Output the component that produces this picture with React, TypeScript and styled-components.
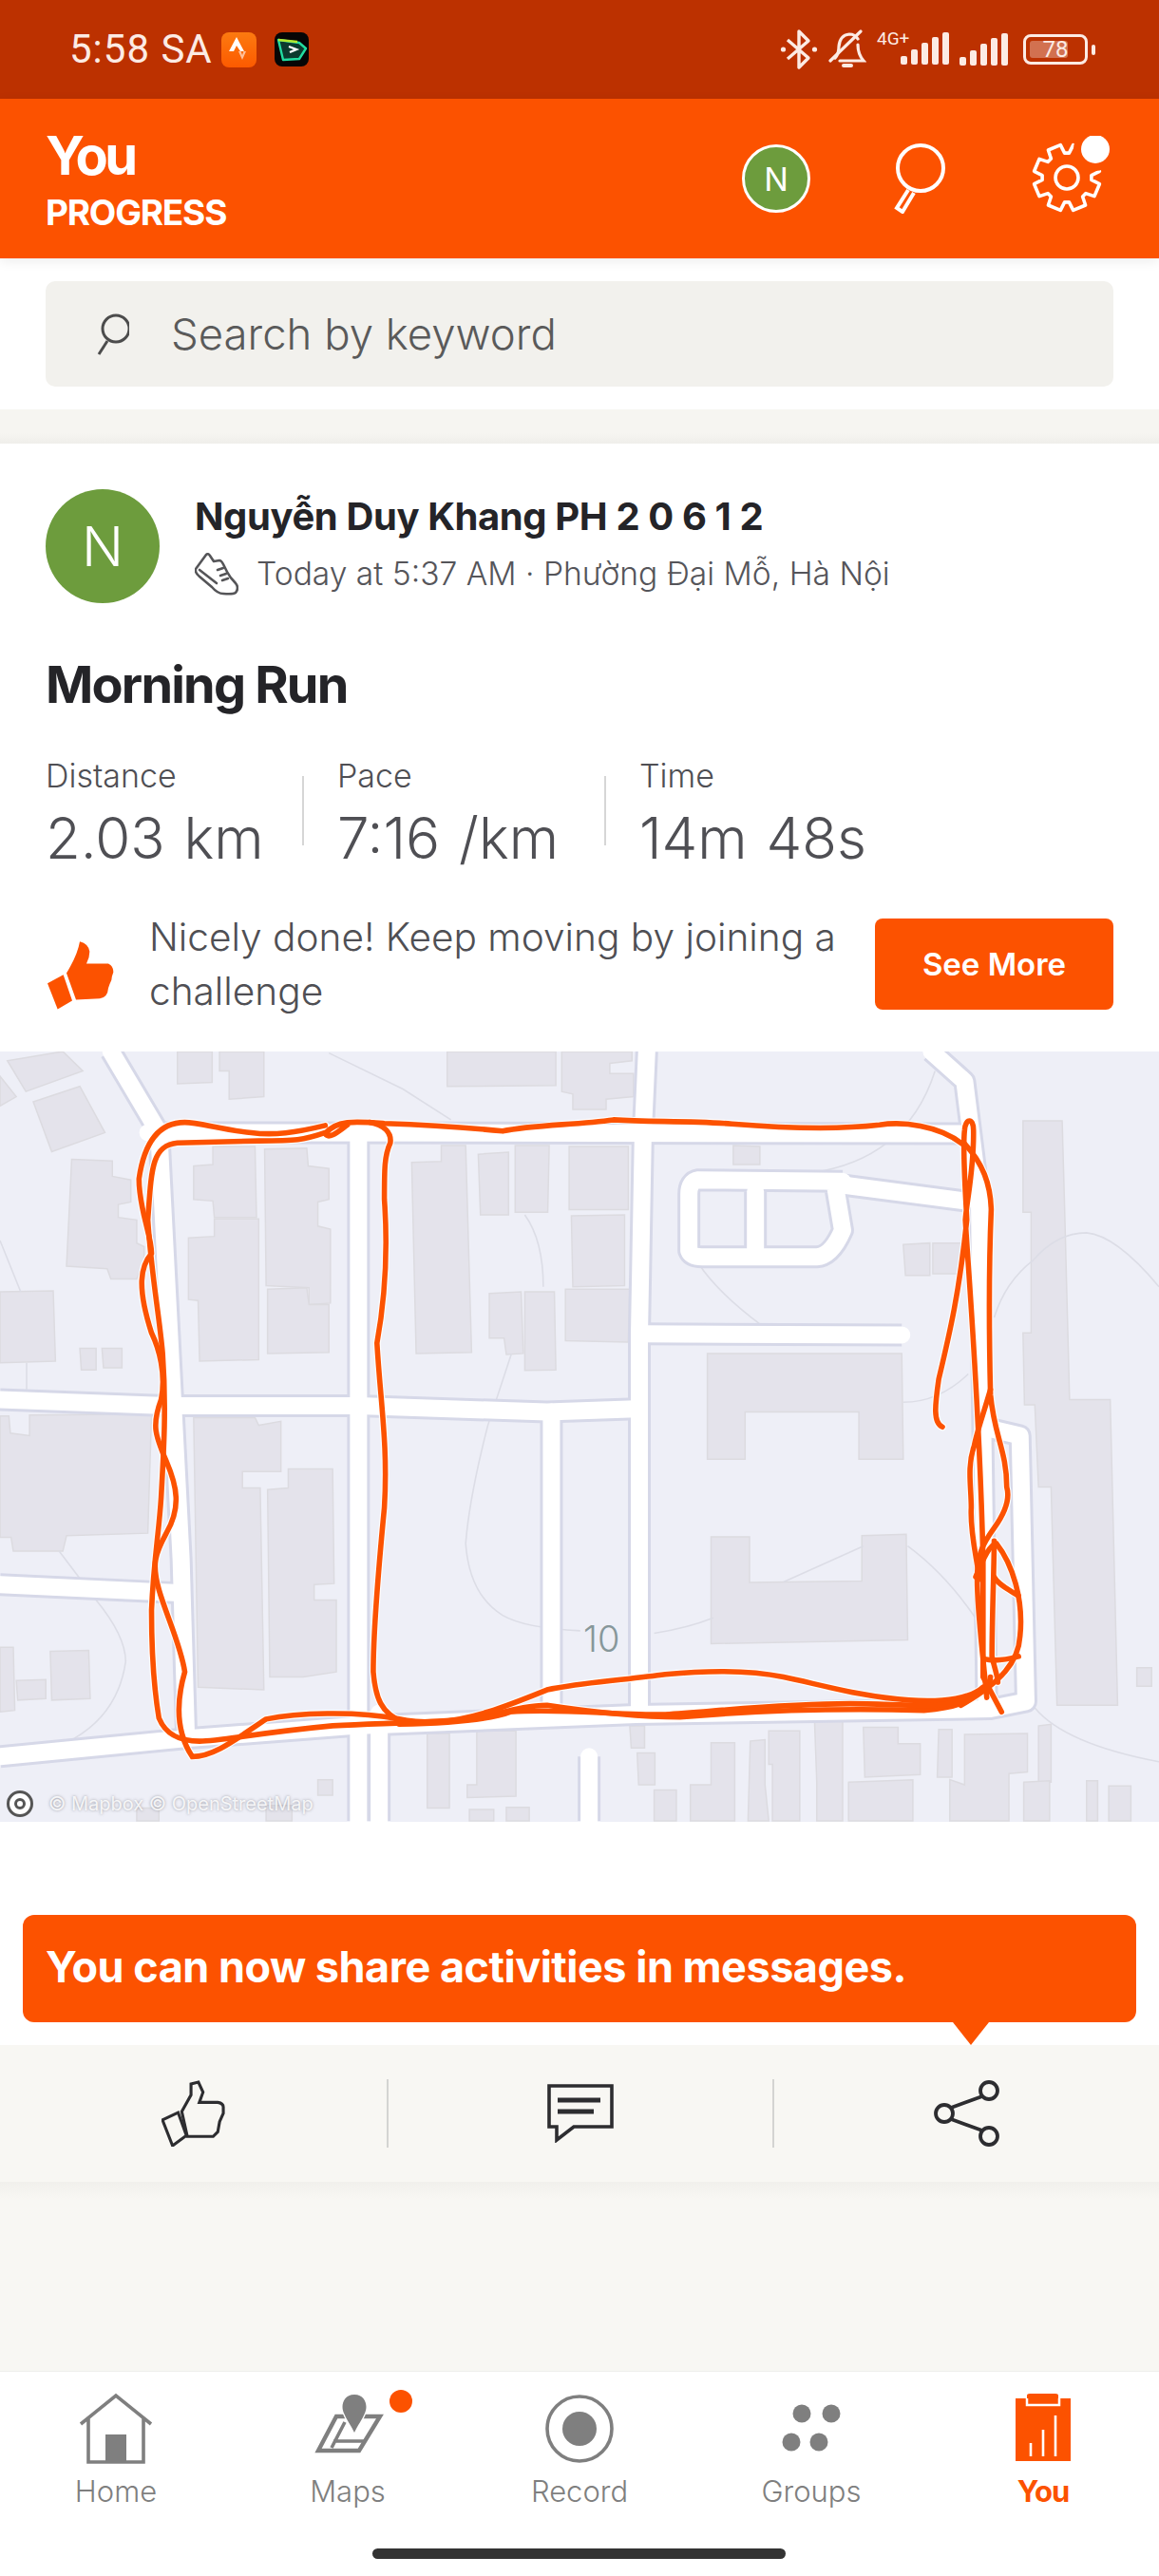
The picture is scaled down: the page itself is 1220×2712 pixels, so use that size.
import React from "react";
import styled, { createGlobalStyle } from "styled-components";

const ORANGE = "#FC5200";

const Global = createGlobalStyle`
  html, body { margin: 0; padding: 0; background: #fff; }
  body { font-family: Inter, "Noto Sans", sans-serif; }
  * { box-sizing: border-box; }
`;

const Page = styled.div`
  width: 1220px;
  height: 2712px;
  overflow: hidden;
  display: flex;
  flex-direction: column;
  background: #fff;
`;

/* ---------- status bar ---------- */
const StatusBar = styled.div`
  height: 104px;
  flex: none;
  background: #bc3100;
  display: flex;
  align-items: center;
  justify-content: space-between;
  padding: 0 64px 0 73px;
  color: #fcebe4;
`;
const StatusLeft = styled.div`
  display: flex;
  align-items: center;
  gap: 9px;
`;
const Clock = styled.span`
  font: 400 42px/1 Roboto, sans-serif;
  letter-spacing: 1px;
`;
const StatusRight = styled.div`
  display: flex;
  align-items: center;
  gap: 11px;
`;
const NetLabel = styled.div`
  position: relative;
  width: 76px;
  height: 36px;
  display: flex;
  justify-content: flex-end;
`;
const FourG = styled.span`
  position: absolute;
  left: 0;
  top: -3px;
  font: 400 19px/1 Roboto, sans-serif;
`;
const Battery = styled.div`
  position: relative;
  width: 68px;
  height: 32px;
  border: 3px solid #fcebe4;
  border-radius: 8px;
  margin-left: 5px;
  margin-right: 11px;
  display: flex;
  align-items: center;
  justify-content: center;
  font: 400 24px/1 Roboto, sans-serif;
  &::before {
    content: "";
    position: absolute;
    left: 4px;
    top: 4px;
    bottom: 4px;
    width: 40px;
    border-radius: 3px;
    background: rgba(252, 235, 228, 0.35);
  }
  &::after {
    content: "";
    position: absolute;
    right: -11px;
    top: 8px;
    width: 4px;
    height: 11px;
    border-radius: 2px;
    background: #fcebe4;
  }
`;
const BatteryValue = styled.span`
  position: relative;
`;

/* ---------- header ---------- */
const Header = styled.header`
  position: relative;
  z-index: 2;
  height: 168px;
  flex: none;
  background: ${ORANGE};
  display: flex;
  justify-content: space-between;
  align-items: center;
  padding: 0 50px 0 48px;
  color: #fff;
  box-shadow: 0 3px 12px rgba(0, 0, 0, 0.08);
`;
const HeaderTitles = styled.div`
  display: flex;
  flex-direction: column;
`;
const HeaderTitle = styled.div`
  font-size: 56px;
  line-height: 68px;
  font-weight: 700;
  letter-spacing: -3.4px;
`;
const HeaderSub = styled.div`
  font-size: 37px;
  line-height: 44px;
  font-weight: 700;
  letter-spacing: -1.2px;
  margin-top: 4px;
`;
const HeaderActions = styled.div`
  display: flex;
  align-items: center;
`;
const HeaderAvatar = styled.div`
  width: 72px;
  height: 72px;
  border-radius: 50%;
  border: 3px solid #fff;
  background: #6d9c3d;
  display: flex;
  align-items: center;
  justify-content: center;
  font-size: 34px;
  color: #fff;
  margin-right: 87px;
`;
const SearchGlass = styled.svg`
  display: block;
  margin-right: 84px;
`;

/* ---------- search ---------- */
const SearchSection = styled.section`
  flex: none;
  height: 159px;
  padding: 24px 48px;
  background: #fff;
`;
const SearchBox = styled.div`
  height: 111px;
  border-radius: 10px;
  background: #f2f1ed;
  display: flex;
  align-items: center;
  padding-left: 54px;
  gap: 44px;
  font-size: 45.5px;
  color: #5a5a5a;
  font-weight: 300;
`;
const Gap = styled.div`
  flex: none;
  height: 36px;
  background: linear-gradient(#f6f5f1 70%, #efeeea 100%);
`;

/* ---------- activity card ---------- */
const Card = styled.article`
  flex: none;
  padding: 48px 48px 44px;
  background: #fff;
`;
const AuthorRow = styled.div`
  display: flex;
  gap: 37px;
  height: 120px;
`;
const AuthorAvatar = styled.div`
  width: 120px;
  height: 120px;
  border-radius: 50%;
  background: #6d9c3d;
  color: #fff;
  font-size: 58px;
  font-weight: 300;
  display: flex;
  align-items: center;
  justify-content: center;
`;
const AuthorText = styled.div`
  display: flex;
  flex-direction: column;
`;
const AuthorName = styled.div`
  font-size: 40px;
  line-height: 58px;
  font-weight: 700;
  color: #242428;
  letter-spacing: -0.4px;
`;
const AuthorMeta = styled.div`
  display: flex;
  align-items: center;
  gap: 19px;
  margin-top: 7px;
  font-size: 33.6px;
  line-height: 48px;
  font-weight: 300;
  color: #55555a;
`;
const ActivityTitle = styled.h1`
  margin: 51px 0 0;
  font-size: 54px;
  line-height: 70px;
  font-weight: 700;
  color: #242428;
  letter-spacing: -1.8px;
`;
const Stats = styled.div`
  display: flex;
  margin-top: 41px;
`;
const Stat = styled.div<{ $width: number }>`
  width: ${(p) => p.$width}px;
  flex: none;
`;
const StatLabel = styled.div`
  font-size: 34px;
  line-height: 40px;
  font-weight: 300;
  color: #4f4f54;
`;
const StatValue = styled.div`
  margin-top: 11px;
  font-size: 60px;
  line-height: 68px;
  font-weight: 300;
  word-spacing: 3px;
  color: #4f4f54;
`;
const StatDivider = styled.div`
  flex: none;
  width: 2px;
  height: 73px;
  margin: 20px 35px 0 0;
  background: #d6d6d6;
`;
const TipRow = styled.div`
  display: flex;
  align-items: center;
  height: 96px;
  margin-top: 51px;
`;
const TipThumb = styled.svg`
  flex: none;
  display: block;
  margin: 24px 37px 0 2px;
`;
const TipText = styled.div`
  flex: 1;
  font-size: 40.6px;
  line-height: 57px;
  font-weight: 300;
  color: #4f4f54;
  white-space: pre-line;
`;
const PrimaryButton = styled.button`
  flex: none;
  width: 251px;
  height: 96px;
  border: 0;
  border-radius: 8px;
  background: ${ORANGE};
  color: #fff;
  font: 600 33px Inter, sans-serif;
`;

/* ---------- map ---------- */
const MapFrame = styled.div`
  position: relative;
  flex: none;
  height: 811px;
  background: #eeeff7;
  overflow: hidden;
`;
const MapArt = styled.svg`
  display: block;
  width: 1220px;
  height: 811px;
`;
const MapLabel = styled.span`
  position: absolute;
  left: 614px;
  top: 595px;
  font-size: 38px;
  font-weight: 300;
  color: #87979a;
`;
const Attribution = styled.div`
  position: absolute;
  left: 7px;
  bottom: 5px;
  display: flex;
  align-items: center;
  gap: 16px;
  font-size: 20px;
  color: rgba(255, 255, 255, 0.85);
  text-shadow: 0 0 3px rgba(120, 120, 130, 0.7);
`;
const MapboxMark = styled.span`
  width: 28px;
  height: 28px;
  border-radius: 50%;
  border: 3px solid #555;
  background: #fff;
  display: block;
  position: relative;
  &::after {
    content: "";
    position: absolute;
    inset: 5px;
    border-radius: 50%;
    border: 3px solid #555;
  }
`;

/* ---------- share prompt ---------- */
const PromptSection = styled.section`
  flex: none;
  height: 235px;
  padding: 98px 24px 0;
  background: #fff;
`;
const Prompt = styled.div`
  position: relative;
  height: 113px;
  border-radius: 12px;
  background: ${ORANGE};
  color: #fff;
  display: flex;
  align-items: center;
  padding: 0 0 4px 24px;
  font-size: 45px;
  font-weight: 700;
  letter-spacing: -0.5px;
  &::after {
    content: "";
    position: absolute;
    left: 979px;
    top: 113px;
    border-left: 19px solid transparent;
    border-right: 19px solid transparent;
    border-top: 24px solid ${ORANGE};
  }
`;

/* ---------- action bar ---------- */
const ActionBar = styled.div`
  flex: none;
  height: 144px;
  display: grid;
  grid-template-columns: repeat(3, 1fr);
  align-items: center;
  background: #f8f7f3;
`;
const ActionCell = styled.div<{ $divider?: boolean }>`
  position: relative;
  display: flex;
  justify-content: center;
  align-items: center;
  height: 72px;
  border-left: ${(p) => (p.$divider ? "2px solid #d4d4d2" : "none")};
`;
const Filler = styled.div`
  flex: none;
  height: 199px;
  background: linear-gradient(#f1f0ec 0, #f8f7f3 18px);
`;

/* ---------- tab bar ---------- */
const TabBar = styled.nav`
  position: relative;
  flex: 1;
  background: #fff;
  border-top: 1px solid #efefec;
  display: grid;
  grid-template-columns: repeat(5, 1fr);
  padding-top: 23px;
  align-content: start;
`;
const Tab = styled.div<{ $active?: boolean }>`
  display: flex;
  flex-direction: column;
  align-items: center;
  color: ${(p) => (p.$active ? ORANGE : "#7f7f7f")};
  font-size: 31px;
  font-weight: ${(p) => (p.$active ? 700 : 300)};
  letter-spacing: ${(p) => (p.$active ? "-1px" : "0")};
`;
const TabIcon = styled.svg`
  display: block;
  width: 100px;
  height: 76px;
  overflow: visible;
`;
const TabLabel = styled.span`
  margin-top: 7px;
  line-height: 40px;
`;
const HomeIndicator = styled.div`
  position: absolute;
  left: 392px;
  top: 186px;
  width: 435px;
  height: 11px;
  border-radius: 6px;
  background: #333;
`;

/* ---------- map data (coordinates in the 1568×1500 drawing space) ---------- */
const roads = [
  "M150 12 L215 170 L245 1000 L252 1345",
  "M485 170 L485 1510",
  "M513 1300 L513 1510",
  "M875 12 L870 170 L865 560 L865 1295",
  "M200 170 L1310 172",
  "M0 690 L225 702 L485 702 L740 714 L860 708",
  "M746 714 L746 1290",
  "M0 1385 L250 1350 L480 1325 L860 1303 L1340 1292 L1388 1278 L1380 760 L1335 745",
  "M1260 12 L1305 70 L1325 300 L1335 1292",
  "M872 562 L1220 564",
  "M1140 265 L945 262 Q932 265 932 290 L932 400 Q935 412 950 412 L1105 412 Q1125 410 1140 360 L1130 275",
  "M1130 270 L1305 303",
  "M1022 285 L1022 395",
  "M0 1050 L235 1066",
  "M797 1385 L797 1510",
];

const paths = [
  "M445 15 L545 85 L610 145",
  "M1265 50 Q1245 140 1200 190 Q1160 235 1100 248",
  "M945 425 Q970 480 1030 545",
  "M710 330 Q735 380 735 470",
  "M692 600 L660 740 Q635 880 630 970 Q635 1070 680 1110 Q710 1135 785 1140",
  "M885 1145 Q930 1135 965 1115",
  "M1060 1045 L1168 975",
  "M1228 975 Q1280 1030 1322 1120",
  "M1222 695 Q1270 695 1310 640",
  "M1345 530 Q1360 460 1398 418 Q1430 365 1470 365 Q1510 370 1568 470",
  "M1400 1290 Q1440 1360 1568 1395",
  "M0 380 L28 480",
  "M36 618 L36 670",
  "M80 985 L130 1080 Q170 1150 170 1200 Q160 1300 100 1350",
];

const buildings = [
  "240,12 287,12 287,72 240,75",
  "297,12 357,12 357,100 310,105 310,50 297,50",
  "605,12 752,12 752,78 605,80",
  "760,12 855,12 855,30 825,35 825,55 857,55 857,100 820,105 820,125 775,125 775,95 760,90",
  "10,30 85,12 112,50 35,90",
  "0,60 22,100 0,118",
  "45,110 108,80 142,170 70,207",
  "97,222 152,225 152,255 177,262 177,305 160,310 160,335 185,340 185,385 195,392 195,420 185,455 150,455 145,435 90,430",
  "0,480 72,478 75,615 0,618",
  "108,590 130,590 130,632 110,632",
  "138,590 165,590 165,628 140,628",
  "262,235 288,232 288,197 345,197 347,335 290,335 288,303 262,300",
  "358,202 415,200 417,235 445,240 445,300 430,305 430,352 447,358 447,502 418,505 418,472 360,468",
  "255,375 290,372 290,338 350,338 350,612 270,615 268,497 255,495",
  "362,475 415,472 418,505 445,505 445,598 362,600",
  "557,228 597,226 597,195 630,195 638,598 563,600",
  "647,212 688,208 688,330 650,330",
  "697,195 743,195 741,325 697,325",
  "770,197 850,197 850,320 770,320",
  "773,332 845,330 845,468 775,470",
  "662,483 705,480 708,600 685,602 682,570 662,570",
  "710,480 750,480 752,632 710,633",
  "765,475 852,475 850,578 765,575",
  "992,195 1028,197 1028,232 992,232",
  "1222,388 1258,385 1258,448 1225,448",
  "1262,385 1300,385 1298,445 1262,445",
  "957,600 1220,600 1222,806 1162,806 1162,714 1008,714 1008,806 957,806",
  "962,957 1014,957 1014,1046 1166,1043 1166,955 1226,952 1228,1158 962,1165",
  "1384,147 1437,147 1440,300 1447,690 1502,690 1512,1285 1430,1285 1422,860 1405,860 1400,700 1386,700 1384,560 1395,560 1395,325 1384,325",
  "1538,1212 1558,1212 1558,1248 1538,1248",
  "0,722 12,722 14,755 40,760 40,720 205,718 200,950 90,955 85,985 18,985 15,958 0,958",
  "262,725 345,725 350,740 380,732 380,830 328,830 328,862 352,862 357,1255 268,1250",
  "362,865 390,862 390,825 450,825 452,1048 425,1050 425,1080 455,1080 455,1220 410,1230 365,1230",
  "0,1172 18,1172 20,1295 0,1298",
  "22,1237 62,1235 62,1272 24,1275",
  "68,1180 120,1178 122,1272 70,1275",
  "578,1340 608,1340 608,1485 578,1485",
  "645,1335 698,1335 698,1462 632,1465 632,1440 645,1440",
  "852,1325 872,1325 872,1368 854,1368",
  "862,1378 886,1378 886,1440 864,1440",
  "885,1450 915,1450 915,1510 885,1510",
  "962,1358 994,1358 994,1510 934,1510 934,1440 962,1440",
  "1015,1355 1035,1352 1035,1440 1040,1510 1012,1510",
  "1040,1335 1082,1335 1082,1510 1045,1510 1045,1400 1040,1400",
  "1102,1315 1140,1315 1140,1510 1105,1510 1105,1435",
  "1168,1328 1215,1328 1215,1360 1245,1360 1245,1420 1170,1425",
  "1148,1435 1235,1430 1235,1510 1148,1510",
  "1270,1332 1288,1332 1288,1425 1268,1425",
  "1305,1342 1390,1340 1390,1415 1365,1418 1365,1510 1285,1510 1285,1430 1305,1440",
  "1405,1325 1422,1322 1422,1435 1405,1435",
  "1385,1435 1420,1432 1420,1510 1385,1510",
  "1470,1432 1485,1432 1485,1510 1470,1510",
  "1500,1442 1530,1442 1530,1510 1500,1510",
  "430,1430 450,1430 450,1460 430,1460",
  "635,1488 668,1488 668,1510 635,1510",
  "685,1484 716,1484 716,1510 685,1510",
  "360,1480 395,1480 395,1510 360,1510",
  "185,1485 215,1485 215,1510 185,1510",
];

const route = [
  "M1275 743 C1262 735 1265 700 1270 650 C1285 560 1298 480 1308 340 C1306 280 1302 200 1305 165 C1306 142 1317 140 1317 165 C1318 240 1308 300 1306 340 C1312 480 1325 700 1330 1000 L1330 1230 L1355 1298",
  "M1302 192 C1270 155 1220 148 1190 155 C1130 165 1050 160 990 153 C930 146 880 150 830 145 C780 155 720 155 680 167 C630 160 580 155 520 152 C480 148 455 145 440 172 C445 185 460 165 470 155",
  "M440 156 C400 170 370 176 340 170 C300 165 270 150 250 150 C215 150 195 190 188 260 C188 320 205 370 205 405 C190 430 185 470 205 560 C215 590 225 640 218 690 C205 740 210 760 225 810 C240 860 245 900 225 950 C210 990 205 1010 215 1060 C225 1110 245 1170 250 1220 C240 1270 235 1330 260 1385 C290 1385 320 1350 360 1312 C400 1300 480 1295 540 1312 C560 1318 575 1318 590 1318",
  "M440 170 C410 185 400 186 350 186 L240 190 C205 195 205 240 200 340 C205 450 215 520 220 600 C225 700 222 780 218 880 C215 950 208 1000 205 1100 C205 1180 208 1250 215 1310 C225 1345 245 1355 270 1355 C300 1355 340 1340 450 1325 C520 1320 560 1320 640 1312 C680 1300 710 1285 740 1285 C800 1298 860 1308 920 1308 C1000 1298 1120 1290 1250 1295 C1290 1290 1315 1280 1330 1250",
  "M500 150 C520 155 530 170 528 190 C520 215 520 240 520 300 C525 400 520 500 510 580 C515 700 525 780 520 900 C510 1050 505 1150 505 1220 C508 1270 515 1300 545 1318",
  "M590 1318 C640 1312 680 1290 740 1255 C780 1242 850 1235 900 1225 C950 1218 1010 1215 1060 1230 C1110 1245 1170 1270 1230 1275 C1280 1280 1315 1270 1330 1250",
  "M540 1322 C600 1320 660 1315 690 1298 C760 1290 830 1305 900 1303 C980 1295 1060 1282 1150 1282 C1220 1282 1280 1295 1310 1270 C1330 1255 1340 1245 1340 1230",
  "M1304 190 C1330 230 1340 270 1341 320 C1338 420 1338 560 1340 680 C1345 760 1362 790 1362 860 C1368 890 1355 920 1345 940 C1330 970 1322 990 1322 1040 C1322 1100 1328 1160 1335 1270",
  "M1340 670 C1330 720 1320 760 1318 780 C1308 820 1314 860 1314 900 C1312 950 1322 1000 1325 1040",
  "M1320 1035 C1330 1000 1340 970 1348 970 C1370 1010 1385 1080 1380 1150 C1378 1200 1355 1240 1300 1285",
  "M1345 965 C1345 1010 1342 1120 1342 1190 C1345 1210 1350 1230 1350 1240",
  "M1332 1195 C1345 1200 1365 1195 1378 1190",
  "M1345 1035 C1350 1050 1365 1060 1378 1072",
];

/* ---------- icons ---------- */
const gearPath = (() => {
  const cx = 43;
  const cy = 44;
  const rOuter = 35;
  const rRoot = 26;
  const pts: string[] = [];
  for (let i = 0; i < 8; i++) {
    const a = ((i * 45 + 22.5) * Math.PI) / 180;
    const at = (r: number, d: number) =>
      `${(cx + r * Math.cos(a + d)).toFixed(1)} ${(cy + r * Math.sin(a + d)).toFixed(1)}`;
    pts.push(at(rRoot, -0.3), at(rOuter, -0.2), at(rOuter, 0.2), at(rRoot, 0.3));
  }
  return `M${pts.join(" L")} Z`;
})();

const StatusApps = () => (
  <>
    <svg width="37" height="37" viewBox="0 0 37 37">
      <defs>
        <linearGradient id="strava-tile" x1="0" y1="0" x2="0" y2="1">
          <stop offset="0" stopColor="#fc7a10" />
          <stop offset="1" stopColor="#fc5a00" />
        </linearGradient>
      </defs>
      <rect width="37" height="37" rx="8" fill="url(#strava-tile)" />
      <path d="M16 5 L8 20 H13 L16 14 L20 20 H24 Z" fill="#fff" />
      <path d="M18 20 L22 29 L26 20 H23.5 L22 24 L20.5 20 Z" fill="#ffc09a" />
    </svg>
    <svg width="36" height="36" viewBox="0 0 36 36" style={{ marginLeft: 10 }}>
      <rect width="36" height="36" rx="8" fill="#060606" />
      <path d="M4 8 L26 11 L33 17 L26 28 L9 29 Z" fill="#0c3a2e" stroke="#22dca0" strokeWidth="2.4" strokeLinejoin="round" />
      <path d="M4 8 L24 10" stroke="#b4e830" strokeWidth="2.6" />
      <path d="M15 15 L23 18 L16 21" fill="none" stroke="#fff" strokeWidth="2.4" />
    </svg>
  </>
);

const Bars = () => (
  <svg width="51" height="34" viewBox="0 0 51 34" fill="#fcebe4">
    <rect x="0" y="25" width="7" height="9" rx="2" />
    <rect x="11" y="18" width="7" height="16" rx="2" />
    <rect x="22" y="11" width="7" height="23" rx="2" />
    <rect x="33" y="5" width="7" height="29" rx="2" />
    <rect x="44" y="0" width="7" height="34" rx="2" />
  </svg>
);

const HeaderSearchIcon = () => (
  <SearchGlass width="56" height="74" viewBox="0 0 56 74" fill="none" stroke="#fff" strokeWidth="4">
    <circle cx="29" cy="26" r="24" />
    <path d="M16 49 L4 68 L10 72 L22 52" />
  </SearchGlass>
);

const GearIcon = () => (
  <svg width="90" height="90" viewBox="0 0 90 90" fill="none" style={{ display: "block" }}>
    <mask id="gear-cut">
      <rect width="90" height="90" fill="#fff" />
      <circle cx="73" cy="14" r="23" fill="#000" />
    </mask>
    <g mask="url(#gear-cut)" stroke="#fff" strokeWidth="3.6" strokeLinejoin="round">
      <path d={gearPath} />
      <circle cx="43" cy="44" r="12" />
    </g>
    <circle cx="73" cy="14" r="15" fill="#fff" />
  </svg>
);

const ShoeIcon = () => (
  <svg width="46" height="45" viewBox="0 0 46 45" fill="none" stroke="#555558" strokeWidth="2.6" strokeLinejoin="round" strokeLinecap="round">
    <path d="M1 17 L12 2 Q14 0 16 3 L20 9 L26 8 Q28 8 30 12 L34 20 Q37 26 43 32 Q47 37 43 42 Q40 44 30 43 Q24 43 18 36 L5 25 Q0 21 1 17 Z" />
    <path d="M24 18 L30 16 M27 24 L33 22 M29 29 L35 27" />
    <path d="M5 18 L23 32" />
  </svg>
);

const SearchIconSmall = () => (
  <svg width="34" height="44" viewBox="0 0 34 44" fill="none" stroke="#4c4c4c" strokeWidth="3" style={{ flex: "none" }}>
    <circle cx="20" cy="16" r="14" />
    <path d="M11 29 L2 43" />
  </svg>
);

const HomeTabIcon = () => (
  <TabIcon viewBox="0 0 100 76" fill="none" stroke="#7f7f7f" strokeWidth="3.6">
    <path d="M13 32 L50 2 L87 32 M21 26 V72 H79 V26" />
    <rect x="39" y="43" width="22" height="29" fill="#7f7f7f" stroke="none" />
  </TabIcon>
);

const MapsTabIcon = () => (
  <TabIcon viewBox="0 0 100 76" fill="none">
    <path d="M38 24 L84 24 L62 60 L19 60 Z" stroke="#7f7f7f" strokeWidth="4.4" />
    <path d="M47 30 L33 57 M35 50 H68" stroke="#7f7f7f" strokeWidth="3.6" />
    <path d="M57 1 C48 1 44.5 8 44.5 14 C44.5 22 53 32 57 41 C61 32 69.5 22 69.5 14 C69.5 8 66 1 57 1 Z" fill="#7f7f7f" stroke="#fff" strokeWidth="3" paintOrder="stroke" />
    <circle cx="106" cy="8" r="12" fill={ORANGE} />
  </TabIcon>
);

const RecordTabIcon = () => (
  <TabIcon viewBox="0 0 100 76">
    <circle cx="50" cy="37" r="34" fill="none" stroke="#7f7f7f" strokeWidth="3.6" />
    <circle cx="50" cy="37" r="18" fill="#7f7f7f" />
  </TabIcon>
);

const GroupsTabIcon = () => (
  <TabIcon viewBox="0 0 100 76" fill="#7f7f7f">
    <circle cx="40" cy="21" r="9.5" />
    <circle cx="71" cy="21" r="9.5" />
    <circle cx="29" cy="51" r="9.5" />
    <circle cx="58" cy="51" r="9.5" />
  </TabIcon>
);

const YouTabIcon = () => (
  <TabIcon viewBox="0 0 100 76">
    <path d="M21 5 H33 V2 Q33 0 36 0 H63 Q66 0 66 2 V5 H79 V71 H21 Z" fill={ORANGE} />
    <path d="M33 5 V12 H67 V5" fill="none" stroke="#fff" strokeWidth="2.5" />
    <path d="M37 66 V52 M50 66 V38 M63 66 V23" stroke="#fff" strokeWidth="2.6" />
  </TabIcon>
);

const MapDrawing = () => (
  <MapArt viewBox="0 12 1568 1500" preserveAspectRatio="none">
    <g fill="#e4e3eb" stroke="#dcdbe0" strokeWidth="1.5">
      {buildings.map((p) => (
        <polygon key={p} points={p} vectorEffect="non-scaling-stroke" />
      ))}
    </g>
    <g fill="none" stroke="#dcdde6" strokeWidth="1.6">
      {paths.map((d) => (
        <path key={d} d={d} vectorEffect="non-scaling-stroke" />
      ))}
    </g>
    <g fill="none" stroke="#d6d8e8" strokeWidth="24" strokeLinejoin="round">
      {roads.map((d) => (
        <path key={d} d={d} vectorEffect="non-scaling-stroke" />
      ))}
    </g>
    <g fill="none" stroke="#ffffff" strokeWidth="18" strokeLinejoin="round" strokeLinecap="round">
      {roads.map((d) => (
        <path key={d} d={d} vectorEffect="non-scaling-stroke" />
      ))}
    </g>
    <g fill="none" stroke="#ffffff" strokeWidth="8" strokeLinecap="round" opacity="0.9">
      {route.map((d) => (
        <path key={d} d={d} vectorEffect="non-scaling-stroke" />
      ))}
    </g>
    <g fill="none" stroke={ORANGE} strokeWidth="5.6" strokeLinecap="round">
      {route.map((d) => (
        <path key={d} d={d} vectorEffect="non-scaling-stroke" />
      ))}
    </g>
  </MapArt>
);

export default function App() {
  return (
    <Page>
      <Global />
      <StatusBar>
        <StatusLeft>
          <Clock>5:58 SA</Clock>
          <StatusApps />
        </StatusLeft>
        <StatusRight>
          <svg width="40" height="44" viewBox="0 0 40 44" fill="none" stroke="#fcebe4" strokeWidth="3.4" strokeLinejoin="round">
            <path d="M8 12 L30 31 L20 41 V3 L30 13 L8 32" />
            <circle cx="3.5" cy="22" r="2.6" fill="#fcebe4" stroke="none" />
            <circle cx="36.5" cy="22" r="2.6" fill="#fcebe4" stroke="none" />
          </svg>
          <svg width="40" height="42" viewBox="0 0 40 42" fill="none" stroke="#fcebe4" strokeWidth="3.2" strokeLinecap="round">
            <path d="M2 33 L34 2" />
            <path d="M7 30 Q11 26 11 18 Q12 6 22 5 Q28 5 31 10 M31 16 Q31 26 37 33 H12" />
            <path d="M16 38 H24" strokeWidth="4" />
          </svg>
          <NetLabel>
            <FourG>4G+</FourG>
            <Bars />
          </NetLabel>
          <Bars />
          <Battery>
            <BatteryValue>78</BatteryValue>
          </Battery>
        </StatusRight>
      </StatusBar>

      <Header>
        <HeaderTitles>
          <HeaderTitle>You</HeaderTitle>
          <HeaderSub>PROGRESS</HeaderSub>
        </HeaderTitles>
        <HeaderActions>
          <HeaderAvatar>N</HeaderAvatar>
          <HeaderSearchIcon />
          <GearIcon />
        </HeaderActions>
      </Header>

      <SearchSection>
        <SearchBox>
          <SearchIconSmall />
          Search by keyword
        </SearchBox>
      </SearchSection>
      <Gap />

      <Card>
        <AuthorRow>
          <AuthorAvatar>N</AuthorAvatar>
          <AuthorText>
            <AuthorName>Nguyễn Duy Khang PH 2 0 6 1 2</AuthorName>
            <AuthorMeta>
              <ShoeIcon />
              Today at 5:37 AM · Phường Đại Mỗ, Hà Nội
            </AuthorMeta>
          </AuthorText>
        </AuthorRow>
        <ActivityTitle>Morning Run</ActivityTitle>
        <Stats>
          <Stat $width={270}>
            <StatLabel>Distance</StatLabel>
            <StatValue>2.03 km</StatValue>
          </Stat>
          <StatDivider />
          <Stat $width={281}>
            <StatLabel>Pace</StatLabel>
            <StatValue>7:16 /km</StatValue>
          </Stat>
          <StatDivider />
          <Stat $width={400}>
            <StatLabel>Time</StatLabel>
            <StatValue>14m 48s</StatValue>
          </Stat>
        </Stats>
        <TipRow>
          <TipThumb width="70" height="72" viewBox="30 28 210 215" fill={ORANGE}>
            <path d="M30 160 L80 133 L108 215 L62 242 Z" />
            <path d="M90 128 Q125 70 132 28 Q160 35 163 60 Q163 80 153 98 L222 98 Q238 105 238 125 Q232 140 232 150 Q225 165 222 175 Q220 205 195 208 L120 212 Z" />
          </TipThumb>
          <TipText>{"Nicely done! Keep moving by joining a\nchallenge"}</TipText>
          <PrimaryButton>See More</PrimaryButton>
        </TipRow>
      </Card>

      <MapFrame>
        <MapDrawing />
        <MapLabel>10</MapLabel>
        <Attribution>
          <MapboxMark />© Mapbox © OpenStreetMap
        </Attribution>
      </MapFrame>

      <PromptSection>
        <Prompt>You can now share activities in messages.</Prompt>
      </PromptSection>

      <ActionBar>
        <ActionCell>
          <svg width="67" height="70" viewBox="-1 -1 69 72" fill="none" stroke="#2d2d30" strokeWidth="3.2">
            <path d="M0 42 L17 34 L26 59 L11 70 Z" />
            <path d="M21 33 L31 15 L31 3 L39 1 L44 12 L40 23 L60 23 Q66 24 66 28 L66 35 L62 44 L60 55 L55 60 L27 60 Z" />
          </svg>
        </ActionCell>
        <ActionCell $divider>
          <svg width="70" height="62" viewBox="0 0 70 62" fill="none" stroke="#2d2d30" strokeWidth="3.6">
            <path d="M2 2 H68 V45 H28 L10 59 V45 H2 Z" />
            <path d="M11 17 H56 M11 29 H49" strokeWidth="5" />
          </svg>
        </ActionCell>
        <ActionCell $divider>
          <svg width="72" height="72" viewBox="0 0 72 72" fill="none" stroke="#2d2d30" strokeWidth="3.8">
            <circle cx="59" cy="12" r="9" />
            <circle cx="12" cy="36" r="9" />
            <circle cx="59" cy="60" r="9" />
            <path d="M19 30 L52 18 M19 42 L52 54" />
          </svg>
        </ActionCell>
      </ActionBar>
      <Filler />

      <TabBar>
        <Tab>
          <HomeTabIcon />
          <TabLabel>Home</TabLabel>
        </Tab>
        <Tab>
          <MapsTabIcon />
          <TabLabel>Maps</TabLabel>
        </Tab>
        <Tab>
          <RecordTabIcon />
          <TabLabel>Record</TabLabel>
        </Tab>
        <Tab>
          <GroupsTabIcon />
          <TabLabel>Groups</TabLabel>
        </Tab>
        <Tab $active>
          <YouTabIcon />
          <TabLabel>You</TabLabel>
        </Tab>
        <HomeIndicator />
      </TabBar>
    </Page>
  );
}
